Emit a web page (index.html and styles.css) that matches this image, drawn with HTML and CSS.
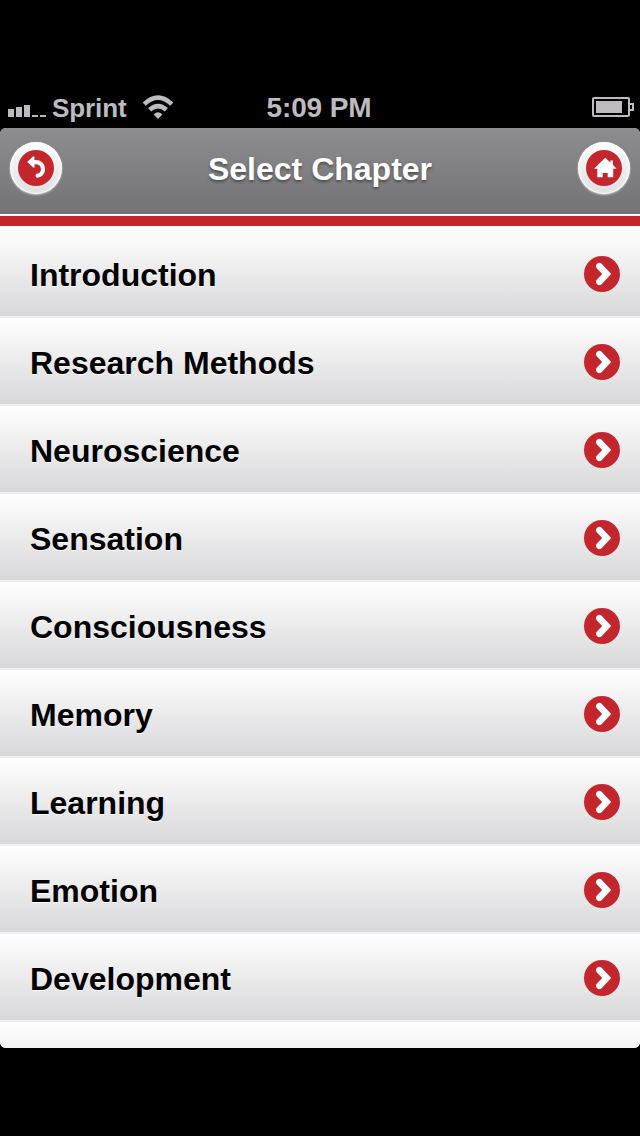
FILE: index.html
```html
<!DOCTYPE html>
<html lang="en">
<head>
    <meta charset="UTF-8">
    <title>Select Chapter</title>
    <link rel="stylesheet" href="styles.css">
</head>
<body>
    <svg class="sprite" width="0" height="0">
        <symbol id="chevron" viewBox="0 0 36 36">
            <circle cx="18" cy="18" r="18" fill="#c4262d"/>
            <path d="M15.4 10.2L22.7 18L15.4 25.8" fill="none" stroke="#fff" stroke-width="6.6" stroke-linecap="round"/>
        </symbol>
    </svg>

    <div class="status-bar">
        <div class="carrier">
            <svg class="signal" width="38" height="13" viewBox="0 0 38 13" fill="#bdbbbf">
                <rect x="0" y="5" width="6" height="8"/>
                <rect x="8" y="3" width="6" height="10"/>
                <rect x="16" y="1" width="6" height="12"/>
                <rect x="24" y="11" width="6" height="2"/>
                <rect x="32" y="11" width="6" height="2"/>
            </svg>
            <span class="carrier-name">Sprint</span>
            <svg class="wifi" width="32" height="25" viewBox="0 0 32 25" fill="none" stroke="#bdbbbf" stroke-width="4.6">
                <path d="M2.2 9.2Q16 -3.8 29.8 9.2"/>
                <path d="M7.6 14.8Q16 7.4 24.4 14.8"/>
                <path d="M16 24L11.6 19.4Q16 15.2 20.4 19.4Z" fill="#bdbbbf" stroke="none"/>
            </svg>
        </div>
        <div class="time">5:09 PM</div>
        <svg class="battery" width="42" height="20" viewBox="0 0 42 20">
            <rect x="1" y="1" width="36" height="18" rx="1" fill="none" stroke="#bdbbbf" stroke-width="2"/>
            <rect x="4" y="4" width="26" height="12" fill="#bdbbbf"/>
            <path d="M37 7H41V13H37" fill="none" stroke="#bdbbbf" stroke-width="2"/>
        </svg>
    </div>

    <div class="app">
        <header class="header">
            <a href="#" class="round-btn" aria-label="Back">
                <svg width="36" height="36" viewBox="0 0 36 36">
                    <circle cx="18" cy="18" r="18" fill="#c4262d"/>
                    <path d="M14.5 12.2H17.5C22 12.2 25 15 25 19C25 23 22.6 25.4 19.6 25.6" fill="none" stroke="#fff" stroke-width="4.2" stroke-linecap="round"/>
                    <path d="M15.6 7L10.2 12L15.8 16.8Z" fill="#fff" stroke="#fff" stroke-width="1.6" stroke-linejoin="round"/>
                </svg>
            </a>
            <h1 class="title">Select Chapter</h1>
            <a href="#" class="round-btn" aria-label="Home">
                <svg width="36" height="36" viewBox="0 0 36 36">
                    <circle cx="18" cy="18" r="18" fill="#c4262d"/>
                    <path d="M19.2 7.8L24.4 12.6V10.4H27V15L30.6 18.7H27.2V27.2H21.7V23H16.7V27.2H11.3V18.7H8Z" fill="#fff"/>
                </svg>
            </a>
        </header>

        <ul class="chapters">
            <li class="chapter">Introduction<svg class="arrow"><use href="#chevron"/></svg></li>
            <li class="chapter">Research Methods<svg class="arrow"><use href="#chevron"/></svg></li>
            <li class="chapter">Neuroscience<svg class="arrow"><use href="#chevron"/></svg></li>
            <li class="chapter">Sensation<svg class="arrow"><use href="#chevron"/></svg></li>
            <li class="chapter">Consciousness<svg class="arrow"><use href="#chevron"/></svg></li>
            <li class="chapter">Memory<svg class="arrow"><use href="#chevron"/></svg></li>
            <li class="chapter">Learning<svg class="arrow"><use href="#chevron"/></svg></li>
            <li class="chapter">Emotion<svg class="arrow"><use href="#chevron"/></svg></li>
            <li class="chapter">Development<svg class="arrow"><use href="#chevron"/></svg></li>
            <li class="chapter"></li>
        </ul>
    </div>
</body>
</html>
```
FILE: styles.css
```css
* {
    margin: 0;
    padding: 0;
    box-sizing: border-box;
}

body {
    font-family: "Liberation Sans", Arial, sans-serif;
    font-weight: bold;
    background: #000;
    color: #000;
    height: 1136px;
    padding-top: 88px;
    overflow: hidden;
}

svg {
    display: block;
    flex: none;
}

.sprite {
    display: none;
}

.status-bar {
    display: grid;
    grid-template-columns: 1fr auto 1fr;
    height: 40px;
    padding: 0 6px 0 8px;
    color: #bdbbbf;
}

.carrier {
    display: flex;
}

.signal {
    margin-top: 16px;
}

.carrier-name {
    margin-left: 6px;
    font-size: 26px;
    line-height: 40px;
    letter-spacing: -0.1px;
}

.wifi {
    margin: 7px 0 0 15px;
}

.time {
    margin: 0 4px 0 0;
    font-size: 28px;
    line-height: 40px;
    letter-spacing: -0.1px;
}

.battery {
    justify-self: end;
    margin-top: 9px;
}

.app {
    height: 920px;
    background: #fff;
    border-radius: 6px;
    overflow: hidden;
}

.header {
    display: flex;
    justify-content: space-between;
    height: 86px;
    padding: 14px 10px 0;
    background: linear-gradient(#8d8c8e, #737274);
}

.title {
    color: #fff;
    font-size: 32px;
    line-height: 54px;
    text-shadow: 0 2px 3px rgba(0, 0, 0, 0.4);
}

.round-btn {
    width: 52px;
    height: 52px;
    padding: 8px;
    border-radius: 50%;
    background: linear-gradient(#fff, #dfdee0);
    box-shadow: inset 0 0 2px 1px #fff, 0 1px 2px rgba(255, 255, 255, 0.6);
}

.chapters {
    margin-top: 2px;
    padding-top: 2px;
    border-top: 10px solid #c4262d;
    list-style: none;
}

.chapter {
    display: flex;
    justify-content: space-between;
    align-items: center;
    height: 88px;
    padding: 4px 20px 0 30px;
    border-top: 2px solid #efeef0;
    background: linear-gradient(#fff, #d8d7d9);
    font-size: 32px;
    text-shadow: 0 1px 0 #fff;
}

.chapter:first-child {
    border-top-color: #fff;
}

.arrow {
    width: 36px;
    height: 36px;
    margin-bottom: 2px;
}
```
